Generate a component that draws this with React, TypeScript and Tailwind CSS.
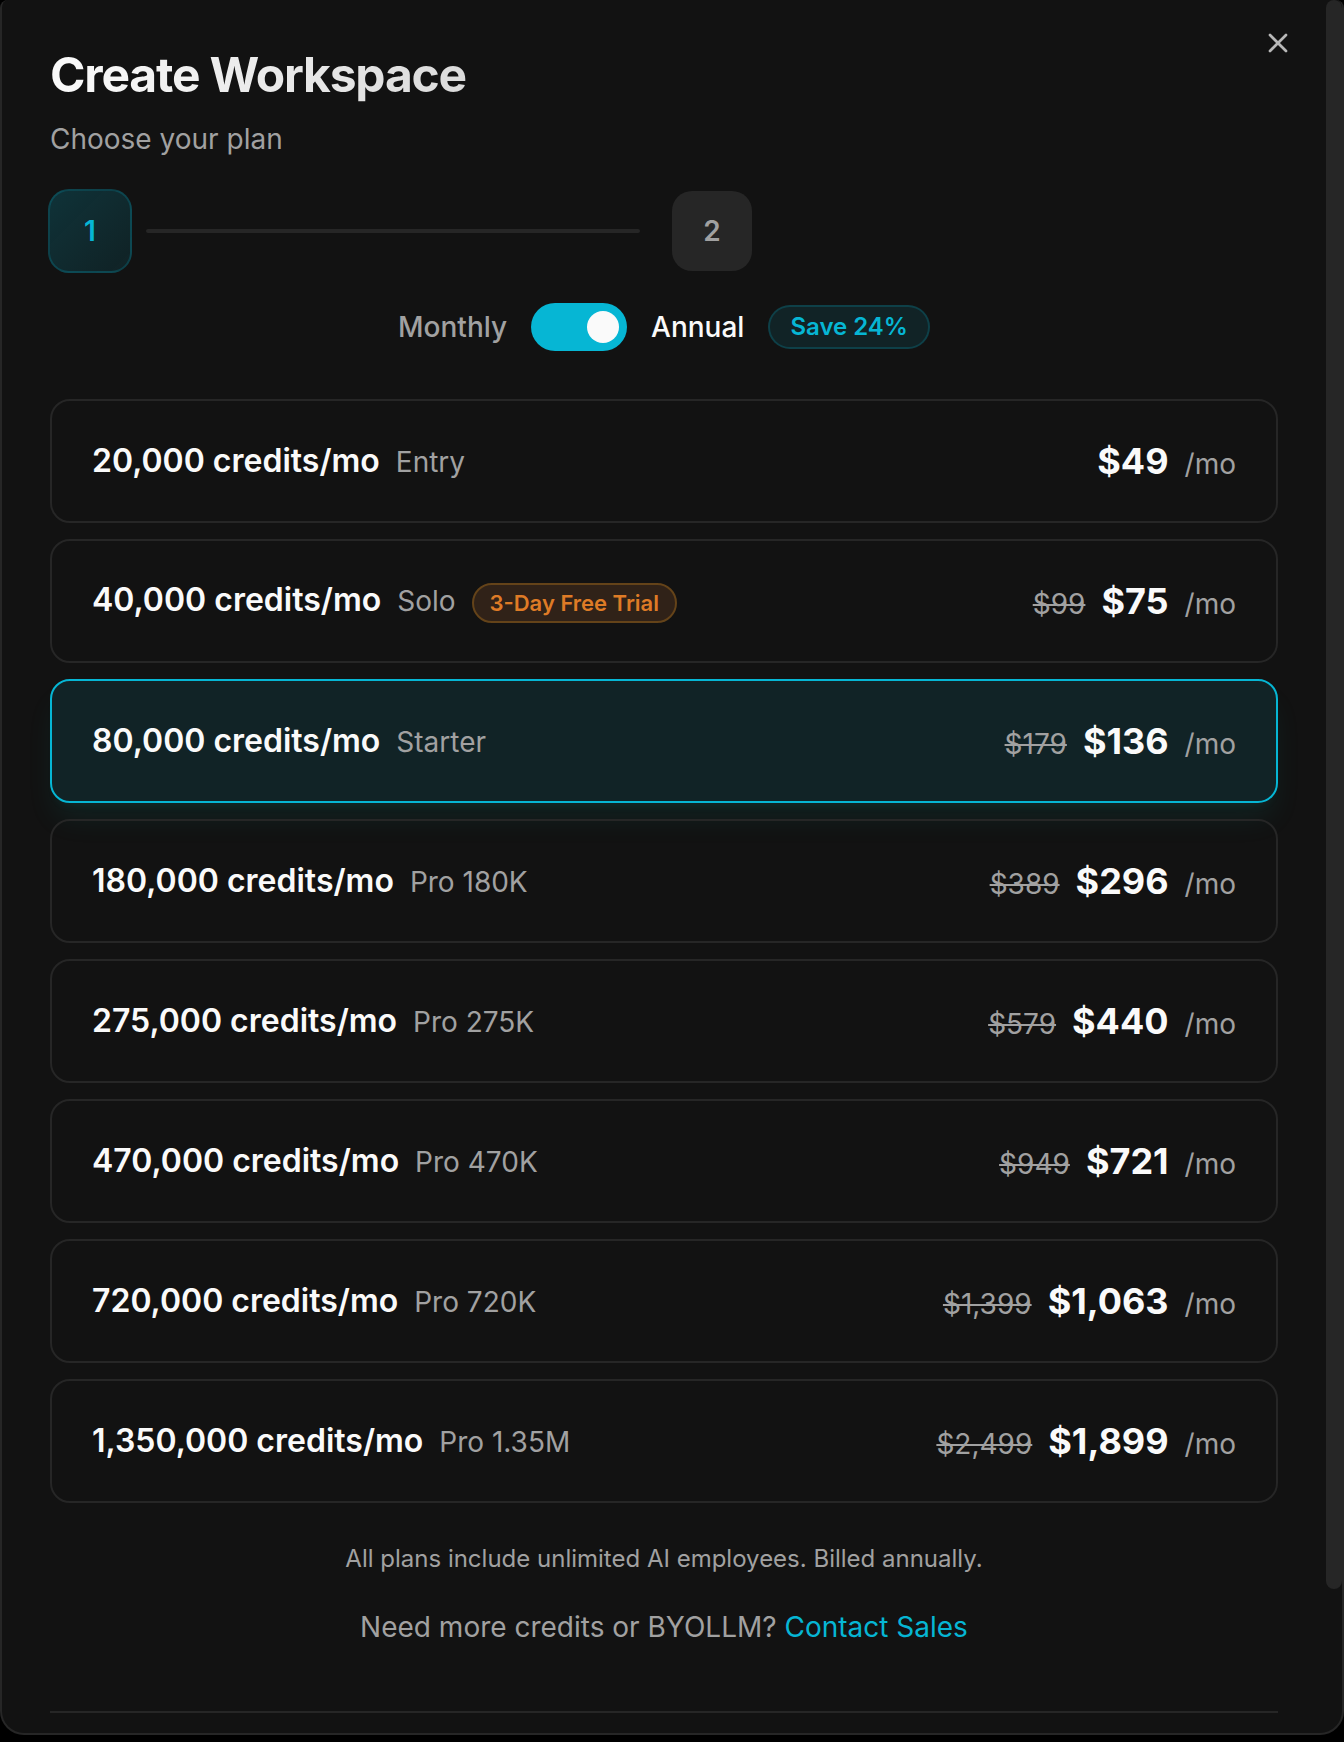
import React, { useState } from "react";
import { X } from "lucide-react";

const plans = [
  { id: "entry", credits: "20,000", name: "Entry", price: "$49" },
  { id: "solo", credits: "40,000", name: "Solo", price: "$75", oldPrice: "$99", badge: "3-Day Free Trial" },
  { id: "starter", credits: "80,000", name: "Starter", price: "$136", oldPrice: "$179" },
  { id: "pro180", credits: "180,000", name: "Pro 180K", price: "$296", oldPrice: "$389" },
  { id: "pro275", credits: "275,000", name: "Pro 275K", price: "$440", oldPrice: "$579" },
  { id: "pro470", credits: "470,000", name: "Pro 470K", price: "$721", oldPrice: "$949" },
  { id: "pro720", credits: "720,000", name: "Pro 720K", price: "$1,063", oldPrice: "$1,399" },
  { id: "pro1350", credits: "1,350,000", name: "Pro 1.35M", price: "$1,899", oldPrice: "$2,499" },
];

export default function App() {
  const [selected, setSelected] = useState("starter");
  const [annual, setAnnual] = useState(true);

  return (
    <div className="min-h-screen bg-black pb-[7px] font-['Inter',sans-serif] [font-variation-settings:'opsz'_14] text-[28px] leading-10 text-[#a1a1a1] antialiased">
      <div className="relative flex overflow-hidden rounded-t-lg rounded-b-3xl border-x-2 border-b-2 border-[#262626] bg-[#121212]">
        <main className="min-w-0 flex-1 px-12 pt-[47px] pb-5">
          <h1 className="bg-linear-to-r from-[#fafafa] to-[#a1a1a1] bg-clip-text text-[48px] leading-[56px] font-bold tracking-tight text-transparent">
            Create Workspace
          </h1>
          <p className="mt-4">Choose your plan</p>

          <ol className="mt-8 grid grid-cols-2 gap-4 font-semibold">
            <li className="flex items-center">
              <div className="-m-0.5 flex size-21 items-center justify-center rounded-[21px] border-2 border-[#06b6d4]/20 bg-linear-to-br from-[#06b6d4]/20 to-[#06b6d4]/10 text-[#06b6d4]">
                1
              </div>
              <div className="mx-4 h-1 flex-1 rounded-full bg-[#262626]" />
            </li>
            <li className="flex items-center">
              <div className="flex size-20 items-center justify-center rounded-[20px] bg-[#262626]">2</div>
            </li>
          </ol>

          <div className="mt-8 flex items-center justify-center gap-6 font-medium">
            <span>Monthly</span>
            <input
              id="billing"
              type="checkbox"
              role="switch"
              aria-label="Annual billing"
              checked={annual}
              onChange={(e) => setAnnual(e.target.checked)}
              className="flex h-12 w-24 appearance-none items-center rounded-full bg-[#262626] px-2 before:size-8 before:rounded-full before:bg-[#fafafa] checked:justify-end checked:bg-[#06b6d4]"
            />
            <label htmlFor="billing" className="text-[#fafafa]">
              Annual
            </label>
            <span className="rounded-full border-2 border-[#06b6d4]/20 bg-[#06b6d4]/10 px-5 py-1 text-[24px] leading-8 font-semibold text-[#06b6d4]">
              Save 24%
            </span>
          </div>

          <div className="mt-12 flex flex-col gap-4">
            {plans.map((plan) => (
              <label
                key={plan.id}
                className="flex items-center justify-between rounded-[20px] border-2 border-[#262626] px-10 py-8 has-checked:border-[#06b6d4] has-checked:bg-[#06b6d4]/10 has-checked:shadow-[0_20px_30px_-6px_rgba(6,182,180,0.1),0_8px_12px_-8px_rgba(6,182,180,0.1)]"
              >
                <input
                  type="radio"
                  name="plan"
                  value={plan.id}
                  checked={selected === plan.id}
                  onChange={() => setSelected(plan.id)}
                  className="sr-only"
                />
                <span className="flex items-baseline gap-4">
                  <span className="text-[32px] font-semibold text-[#fafafa]">{plan.credits} credits/mo</span>
                  <span>{plan.name}</span>
                  {plan.badge && (
                    <span className="rounded-full border-2 border-[#644319] bg-[#302218] px-4 py-0.5 text-[22px] leading-8 font-semibold text-[#de7b26]">
                      {plan.badge}
                    </span>
                  )}
                </span>
                <span className="flex items-baseline gap-4">
                  {plan.oldPrice && <s>{plan.oldPrice}</s>}
                  <span className="text-[36px] leading-[56px] font-bold text-[#fafafa]">{plan.price}</span>
                  <span>/mo</span>
                </span>
              </label>
            ))}
          </div>

          <p className="mt-10 text-center text-[24px] leading-8">
            All plans include unlimited AI employees. Billed annually.
          </p>
          <p className="mt-8 text-center">
            Need more credits or BYOLLM?{" "}
            <a href="#contact" className="text-[#06b6d4]">
              Contact Sales
            </a>
          </p>
          <hr className="mt-16 border-t-2 border-[#262626]" />
        </main>

        {/* scrollbar */}
        <div className="flex w-4 flex-col">
          <div className="flex-11 rounded-full bg-[#262626]" />
          <div className="flex-1" />
        </div>

        <button type="button" aria-label="Close" className="absolute top-[27px] right-12 text-[#b8b8b8]">
          <X size={32} />
        </button>
      </div>
    </div>
  );
}
